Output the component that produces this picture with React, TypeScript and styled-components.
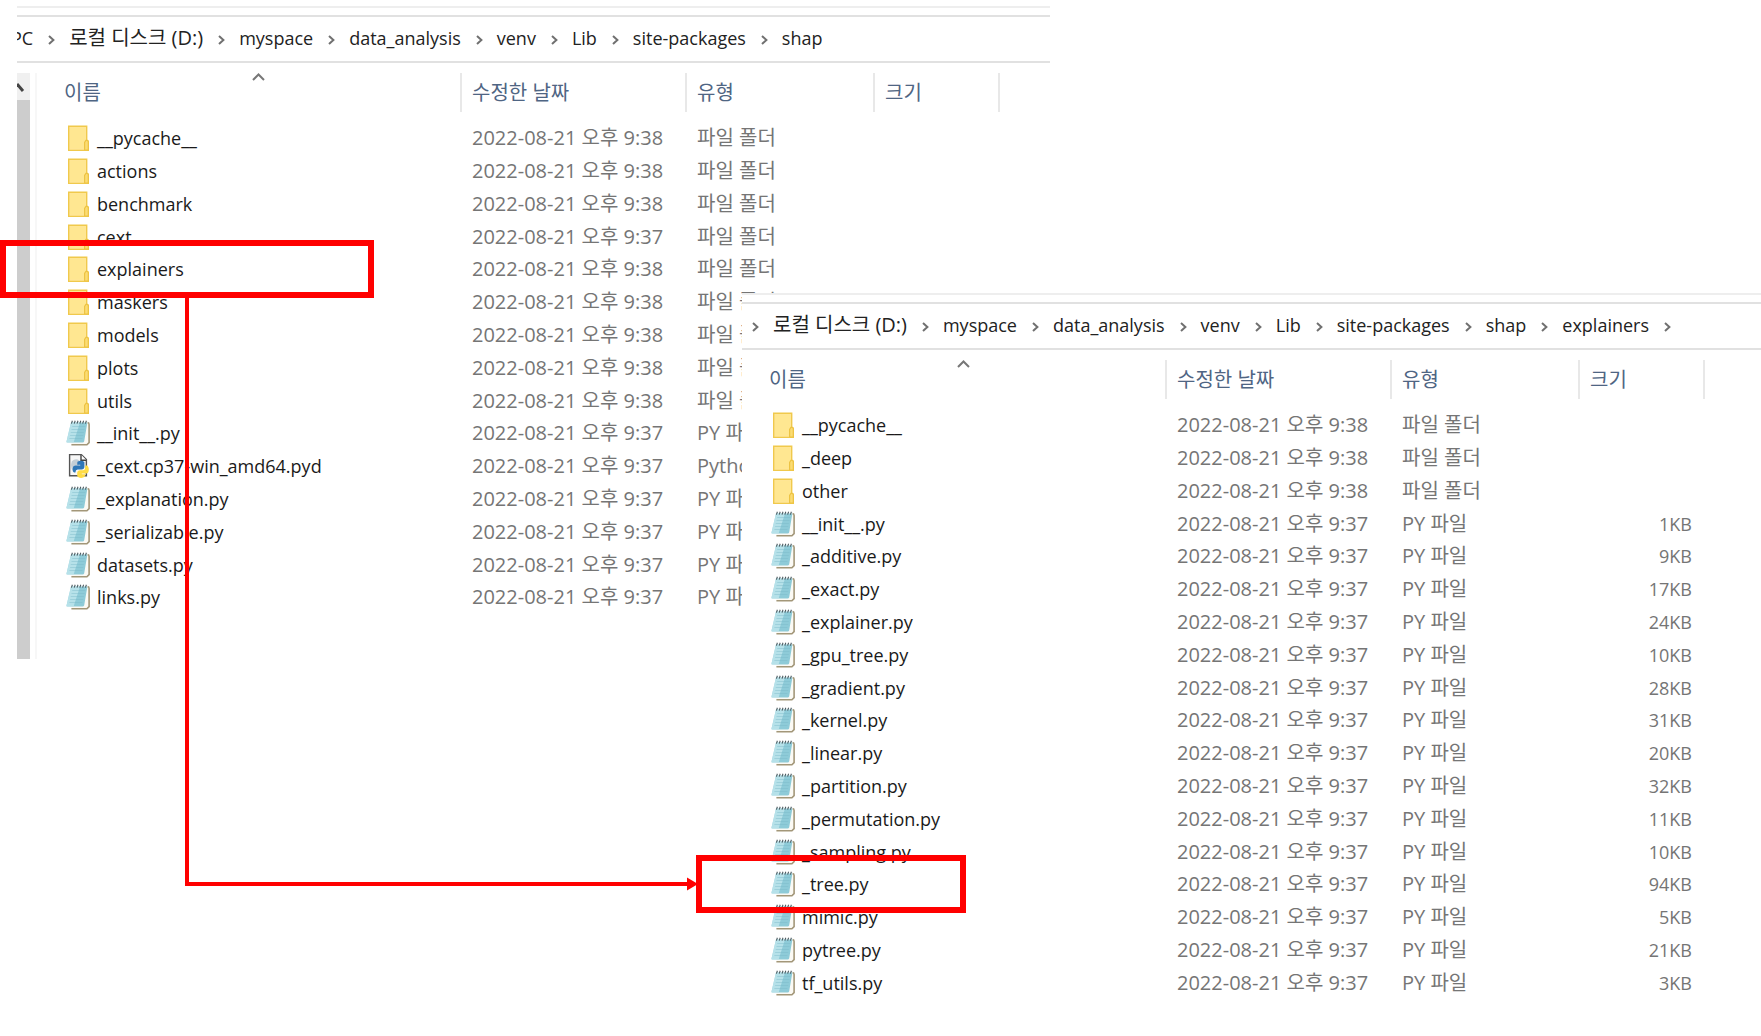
import React from "react";
import styled, { createGlobalStyle } from "styled-components";

const GlobalStyle = createGlobalStyle`
  *, *::before, *::after { box-sizing: border-box; }
  body {
    margin: 0;
    background: #fff;
    color: #1a1a1a;
    font-family: "Open Sans", "Noto Sans CJK KR", sans-serif;
    font-size: 18px;
  }
`;

type Kind = "folder" | "py" | "pyd";
type Entry = { name: string; kind: Kind; time: string; size?: string };

const TYPE_LABEL: Record<Kind, string> = {
  folder: "파일 폴더",
  py: "PY 파일",
  pyd: "Python Extension",
};

const entry = (name: string, kind: Kind, time: string, size?: string): Entry => ({ name, kind, time, size });

const shapFiles: Entry[] = [
  entry("__pycache__", "folder", "9:38"),
  entry("actions", "folder", "9:38"),
  entry("benchmark", "folder", "9:38"),
  entry("cext", "folder", "9:37"),
  entry("explainers", "folder", "9:38"),
  entry("maskers", "folder", "9:38"),
  entry("models", "folder", "9:38"),
  entry("plots", "folder", "9:38"),
  entry("utils", "folder", "9:38"),
  entry("__init__.py", "py", "9:37"),
  entry("_cext.cp37-win_amd64.pyd", "pyd", "9:37"),
  entry("_explanation.py", "py", "9:37"),
  entry("_serializable.py", "py", "9:37"),
  entry("datasets.py", "py", "9:37"),
  entry("links.py", "py", "9:37"),
];

const explainerFiles: Entry[] = [
  entry("__pycache__", "folder", "9:38"),
  entry("_deep", "folder", "9:38"),
  entry("other", "folder", "9:38"),
  entry("__init__.py", "py", "9:37", "1KB"),
  entry("_additive.py", "py", "9:37", "9KB"),
  entry("_exact.py", "py", "9:37", "17KB"),
  entry("_explainer.py", "py", "9:37", "24KB"),
  entry("_gpu_tree.py", "py", "9:37", "10KB"),
  entry("_gradient.py", "py", "9:37", "28KB"),
  entry("_kernel.py", "py", "9:37", "31KB"),
  entry("_linear.py", "py", "9:37", "20KB"),
  entry("_partition.py", "py", "9:37", "32KB"),
  entry("_permutation.py", "py", "9:37", "11KB"),
  entry("_sampling.py", "py", "9:37", "10KB"),
  entry("_tree.py", "py", "9:37", "94KB"),
  entry("mimic.py", "py", "9:37", "5KB"),
  entry("pytree.py", "py", "9:37", "21KB"),
  entry("tf_utils.py", "py", "9:37", "3KB"),
];

const Desktop = styled.main`
  position: relative;
  min-height: 100vh;
  overflow: hidden;
`;

const Win = styled.section<{ $left: number; $top: number; $width?: number }>`
  position: absolute;
  left: ${(p) => p.$left}px;
  top: ${(p) => p.$top}px;
  ${(p) => (p.$width ? `width: ${p.$width}px;` : "right: 0;")}
  overflow: hidden;
  background: #fff;
  border-top: 2px solid #eeeeee;
`;

const AddressBar = styled.nav`
  display: flex;
  align-items: center;
  height: 48px;
  margin-top: 7px;
  padding-bottom: 2px;
  border-top: 2px solid #e1e1e1;
  border-bottom: 2px solid #e1e1e1;
`;

const Crumbs = styled.ol<{ $inset: number }>`
  display: flex;
  align-items: baseline;
  margin: 0 0 0 ${(p) => p.$inset}px;
  padding: 0;
  list-style: none;
  line-height: 30px;
`;

const Crumb = styled.li`
  display: flex;
  align-items: baseline;
`;

const CrumbButton = styled.button<{ $large?: boolean }>`
  padding: 0;
  border: 0;
  background: none;
  color: #222;
  font: inherit;
  font-size: ${(p) => (p.$large ? 20 : 18)}px;
  line-height: 30px;
  white-space: nowrap;
`;

const Separator = styled.svg`
  width: 7px;
  height: 10px;
  margin: 0 14px 0 15px;
  fill: none;
  stroke: #707070;
  stroke-width: 2;
`;

const Body = styled.div`
  display: flex;
  padding-top: 10px;
`;

const ScrollTrack = styled.div`
  display: flex;
  flex-direction: column;
  width: 13px;
  margin-right: 5px;
  background: #cdcdcd;
`;

const ScrollUp = styled.button`
  display: flex;
  height: 27px;
  padding: 9px 0 0;
  border: 0;
  background: #f0f0f0;
`;

const ListPane = styled.div<{ $ruled?: boolean }>`
  flex: 1;
  padding-bottom: ${(p) => (p.$ruled ? 46 : 18)}px;
  border-left: ${(p) => (p.$ruled ? "2px solid #f7f7f7" : "0")};
`;

const FileTable = styled.table`
  table-layout: fixed;
  width: 963px;
  border-collapse: separate;
  border-spacing: 0;
`;

const Col = styled.col<{ $w: number }>`
  width: ${(p) => p.$w}px;
`;

const HeadCell = styled.th<{ $first?: boolean }>`
  position: relative;
  height: 39px;
  padding: 0 0 0 ${(p) => (p.$first ? 27 : 10)}px;
  border-right: 2px solid #e8e8e8;
  text-align: left;
  vertical-align: middle;
`;

const HeadButton = styled.button`
  display: block;
  padding: 0;
  border: 0;
  background: none;
  color: #4f6583;
  font: inherit;
  font-size: 20px;
  font-weight: 400;
  line-height: 38px;
`;

const SortCaret = styled.svg`
  position: absolute;
  left: 215px;
  top: 0;
  width: 13px;
  height: 8px;
  fill: none;
  stroke: #777;
  stroke-width: 2;
`;

const Rows = styled.tbody`
  &::before {
    content: "";
    display: table-row;
    height: 9px;
  }
`;

const Row = styled.tr`
  height: 33px;
  &:nth-child(5n) { height: 32px; }
`;

const Cell = styled.td<{ $numeric?: boolean }>`
  padding: 0 ${(p) => (p.$numeric ? 13 : 0)}px 0 10px;
  overflow: hidden;
  color: #757575;
  font-size: ${(p) => (p.$numeric ? 18 : 20)}px;
  line-height: 28px;
  text-align: ${(p) => (p.$numeric ? "right" : "left")};
  vertical-align: middle;
  white-space: nowrap;
`;

const NameCell = styled.td`
  padding: 0 0 0 29px;
  line-height: 28px;
  vertical-align: middle;
  white-space: nowrap;
`;

const NameLine = styled.div`
  display: flex;
  align-items: center;
  gap: 7px;
`;

const Icon = styled.svg`
  flex: none;
  width: 24px;
  height: 26px;
`;

const Highlight = styled.div<{ $left: number; $top: number; $width: number }>`
  position: absolute;
  left: ${(p) => p.$left}px;
  top: ${(p) => p.$top}px;
  width: ${(p) => p.$width}px;
  height: 58px;
  border: 6px solid #f00;
  pointer-events: none;
`;

const Connector = styled.svg`
  position: absolute;
  left: 185px;
  top: 297px;
  width: 514px;
  height: 596px;
  pointer-events: none;
`;

function FolderIcon() {
  return (
    <Icon viewBox="0 0 24 26" aria-hidden="true">
      <path d="M2.7 1.2h18v15h1.6v9.2H2.7z" fill="#ffe699" stroke="#f0c94c" strokeWidth="1.4" />
      <path d="M4 2.5h15.4v21H4z" fill="#ffe791" />
      <path d="M18.6 24.8v-7.4l1.3-2h1.6l.8 1.2v8.6z" fill="#fbdc74" stroke="#edc343" strokeWidth="1.2" />
    </Icon>
  );
}

function NotepadIcon() {
  return (
    <Icon viewBox="0 0 24 26" aria-hidden="true">
      <path d="M6 3h15.6q1.4 0 1.4 1.4V23l-2 2H5.4z" fill="#fbfaf5" />
      <path d="M21.6 2.6q1.5.2 1.5 1.8v18.2l-2.2 2.2H5.4" fill="none" stroke="#a39779" strokeWidth="1.6" />
      <path d="M5 2.4h16.4l-3.2 18.8q-.3 1.2-1.6 1.2H1.2q-1 0-.7-1z" fill="#8ecbd8" />
      <path d="M5 2.4h9L7.6 22.4H1.2q-1 0-.7-1z" fill="#c3e8ef" opacity=".75" />
      <path d="M6.2 6.5h13M5.5 9.5h13M4.8 12.5h13M4.1 15.5h13M3.4 18.5h13" stroke="#79b9c8" strokeWidth=".8" opacity=".5" />
      <path d="M5.4 3.6l1-2.8M8.2 3.6l1-2.8M11 3.6l1-2.8M13.8 3.6l1-2.8M16.6 3.6l1-2.8M19.4 3.6l1-2.8" stroke="#4c5c62" strokeWidth="1.1" />
    </Icon>
  );
}

function PythonIcon() {
  return (
    <Icon viewBox="0 0 24 26" aria-hidden="true">
      <path d="M3.6 1.6h11.8l5 5v16.2H3.6z" fill="#f7f7f7" stroke="#555" strokeWidth="1.4" />
      <path d="M15 1.8v5.4h5.4" fill="#fff" stroke="#444" strokeWidth="1.4" />
      <path d="M5.8 8.2q4-3.4 7.6-.6v5.2H9.2q-3 .2-2.6 4.6-2.6-3.6-.8-9.2z" fill="#c4ced6" />
      <path d="M11.4 8.8q4-2 7 .2v5.2q-.2 2-2.4 2.2h-4.4q-2 .2-2.2 3H8.2q-1.8-.6-1.6-4 .2-2.6 2.6-2.8h5v-.8h-3z" fill="#2f77b8" />
      <path d="M19.2 12.4h1.6q2 .8 2 4.4t-2.6 3.6h-4.4v.8h3.4v2q-3.4 3.2-7.2.8-.8-.6-.8-1.8v-2.8q.2-2 2.4-2.2h3.4q2-.2 2.2-2z" fill="#ffdc46" />
    </Icon>
  );
}

const icons: Record<Kind, () => React.ReactElement> = {
  folder: FolderIcon,
  py: NotepadIcon,
  pyd: PythonIcon,
};

function Chevron() {
  return (
    <Separator viewBox="0 0 7 10" aria-hidden="true">
      <path d="M1 1l4.4 4L1 9" />
    </Separator>
  );
}

const hasHangul = (text: string) => /[가-힣]/.test(text);

function Path({ parts, inset, leading, trailing }: { parts: string[]; inset: number; leading?: boolean; trailing?: boolean }) {
  return (
    <AddressBar aria-label="경로">
      <Crumbs $inset={inset}>
        {parts.map((part, i) => (
          <Crumb key={part}>
            {(i > 0 || leading) && <Chevron />}
            <CrumbButton type="button" $large={hasHangul(part)}>{part}</CrumbButton>
            {trailing && i === parts.length - 1 && <Chevron />}
          </Crumb>
        ))}
      </Crumbs>
    </AddressBar>
  );
}

function FileList({ files }: { files: Entry[] }) {
  return (
    <FileTable>
      <colgroup>
        <Col $w={425} />
        <Col $w={225} />
        <Col $w={188} />
        <Col $w={125} />
      </colgroup>
      <thead>
        <tr>
          <HeadCell $first scope="col" aria-sort="ascending">
            <SortCaret viewBox="0 0 13 8" aria-hidden="true">
              <path d="M1 7l5.500-5.500L12 7" />
            </SortCaret>
            <HeadButton type="button">이름</HeadButton>
          </HeadCell>
          {["수정한 날짜", "유형", "크기"].map((label) => (
            <HeadCell key={label} scope="col">
              <HeadButton type="button">{label}</HeadButton>
            </HeadCell>
          ))}
        </tr>
      </thead>
      <Rows>
        {files.map((file) => {
          const FileIcon = icons[file.kind];
          return (
            <Row key={file.name}>
              <NameCell>
                <NameLine>
                  <FileIcon />
                  <span>{file.name}</span>
                </NameLine>
              </NameCell>
              <Cell>2022-08-21 오후 {file.time}</Cell>
              <Cell>{TYPE_LABEL[file.kind]}</Cell>
              <Cell $numeric>{file.size}</Cell>
            </Row>
          );
        })}
      </Rows>
    </FileTable>
  );
}

export default function App() {
  return (
    <Desktop>
      <GlobalStyle />
      <Win $left={17} $top={6} $width={1033} aria-label="shap">
        <Path parts={["PC", "로컬 디스크 (D:)", "myspace", "data_analysis", "venv", "Lib", "site-packages", "shap"]} inset={-6} />
        <Body>
          <ScrollTrack>
            <ScrollUp type="button" aria-label="위로 스크롤">
              <svg width="9" height="12" viewBox="0 0 9 12" aria-hidden="true">
                <path d="M0 2l6 7" fill="none" stroke="#444" strokeWidth="3" />
              </svg>
            </ScrollUp>
          </ScrollTrack>
          <ListPane $ruled>
            <FileList files={shapFiles} />
          </ListPane>
        </Body>
      </Win>
      <Win $left={742} $top={293} aria-label="explainers">
        <Path
          parts={["로컬 디스크 (D:)", "myspace", "data_analysis", "venv", "Lib", "site-packages", "shap", "explainers"]}
          inset={-5}
          leading
          trailing
        />
        <Body>
          <ListPane>
            <FileList files={explainerFiles} />
          </ListPane>
        </Body>
      </Win>
      <Highlight $left={0} $top={240} $width={374} />
      <Highlight $left={696} $top={855} $width={270} />
      <Connector viewBox="0 0 514 596" aria-hidden="true">
        <path d="M2 0v587h502" fill="none" stroke="#f00" strokeWidth="4" />
        <path d="M502 580.500l11 6.500-11 6.500z" fill="#f00" />
      </Connector>
    </Desktop>
  );
}
